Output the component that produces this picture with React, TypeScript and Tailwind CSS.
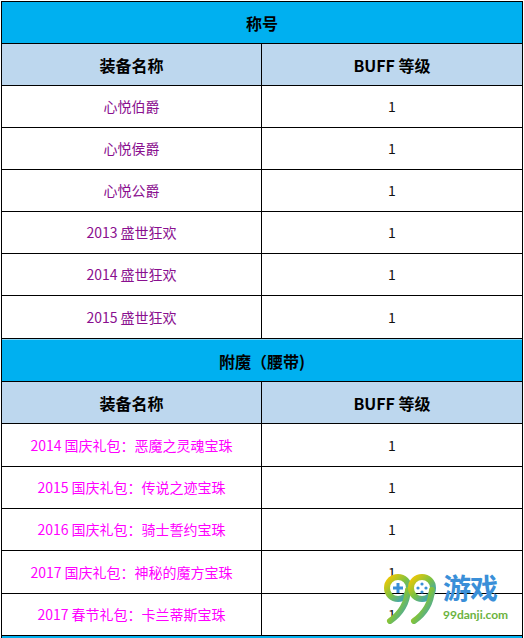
import React from 'react';

const FONT = { fontFamily: '"Microsoft YaHei", "Noto Sans CJK SC", "Noto Sans", sans-serif' };

type Item = { name: string; level: string };

const titles: Item[] = [
  { name: '心悦伯爵', level: '1' },
  { name: '心悦侯爵', level: '1' },
  { name: '心悦公爵', level: '1' },
  { name: '2013 盛世狂欢', level: '1' },
  { name: '2014 盛世狂欢', level: '1' },
  { name: '2015 盛世狂欢', level: '1' },
];

const enchants: Item[] = [
  { name: '2014 国庆礼包：恶魔之灵魂宝珠', level: '1' },
  { name: '2015 国庆礼包：传说之迹宝珠', level: '1' },
  { name: '2016 国庆礼包：骑士誓约宝珠', level: '1' },
  { name: '2017 国庆礼包：神秘的魔方宝珠', level: '1' },
  { name: '2017 春节礼包：卡兰蒂斯宝珠', level: '1' },
];

function Heading({ text, h }: { text: string; h: string }) {
  return (
    <div className={`${h} flex items-center justify-center bg-[#00b0f0] border-b border-black text-[16px] font-bold text-black`}>
      {text}
    </div>
  );
}

function HeaderRow({ h }: { h: string }) {
  return (
    <div className={`${h} flex bg-[#bdd7ee] border-b border-black text-[16px] font-bold text-black`}>
      <div className="w-[260px] flex items-center justify-center border-r border-black">装备名称</div>
      <div className="flex-1 flex items-center justify-center">BUFF 等级</div>
    </div>
  );
}

function DataRow({ item, h, color }: { item: Item; h: string; color: string }) {
  return (
    <div className={`${h} flex bg-white border-b border-black text-[14px]`}>
      <div className={`w-[260px] flex items-center justify-center border-r border-black ${color}`}>{item.name}</div>
      <div className="flex-1 flex items-center justify-center text-[#111]">{item.level}</div>
    </div>
  );
}

function Logo() {
  return (
    <div className="absolute left-[384px] top-[567px] flex items-start gap-[3px] pointer-events-none">
      <svg className="mt-[5px]" width="56" height="52" viewBox="0 0 56 52">
        <defs>
          <linearGradient id="g9" x1="0" y1="0" x2="1" y2="1">
            <stop offset="0" stopColor="#f6c800" />
            <stop offset="0.5" stopColor="#7cc242" />
            <stop offset="1" stopColor="#2e9ad8" />
          </linearGradient>
        </defs>
        <circle cx="14" cy="16" r="11" fill="none" stroke="url(#g9)" strokeWidth="6" />
        <path d="M24 18 C23 32 16 42 6 49" fill="none" stroke="url(#g9)" strokeWidth="6" strokeLinecap="round" />
        <circle cx="38" cy="16" r="11" fill="none" stroke="url(#g9)" strokeWidth="6" />
        <path d="M48 18 C47 32 40 42 30 49" fill="none" stroke="url(#g9)" strokeWidth="6" strokeLinecap="round" />
        <rect x="9" y="14.5" width="10" height="3" fill="#3a8fd8" />
        <rect x="12.5" y="11" width="3" height="10" fill="#3a8fd8" />
        <circle cx="38" cy="12" r="1.6" fill="#3a8fd8" />
        <circle cx="38" cy="20" r="1.6" fill="#3a8fd8" />
        <circle cx="34" cy="16" r="1.6" fill="#3a8fd8" />
        <circle cx="42" cy="16" r="1.6" fill="#3a8fd8" />
      </svg>
      <div className="flex flex-col items-start">
        <span className="text-[28px] leading-[40px] font-bold text-[#3a8fd8] tracking-[-1px]">游戏</span>
        <span className="text-[12px] leading-[15px] font-bold text-[#6cb33e]" style={{ fontFamily: 'Lato, "Open Sans", sans-serif' }}>
          99danji.com
        </span>
      </div>
    </div>
  );
}

export default function App() {
  const titleH = ['h-[42px]', 'h-[42px]', 'h-[42px]', 'h-[42px]', 'h-[42px]', 'h-[43px]'];
  const enchantH = ['h-[43px]', 'h-[42px]', 'h-[42px]', 'h-[43px]', 'h-[42px]'];

  return (
    <div className="relative w-[524px] h-[638px] bg-white overflow-hidden" style={FONT}>
      <div className="ml-[1px] mt-[1px] w-[522px] border-t border-l border-r border-black">
        <Heading text="称号" h="h-[42px]" />
        <HeaderRow h="h-[42px]" />
        {titles.map((t, i) => (
          <DataRow key={t.name} item={t} h={titleH[i]} color="text-[#8a0f8f]" />
        ))}
        <div className="border-t border-[#7fd4f5]" />
        <Heading text="附魔（腰带)" h="h-[42px]" />
        <HeaderRow h="h-[42px]" />
        {enchants.map((t, i) => (
          <DataRow key={t.name} item={t} h={enchantH[i]} color="text-[#ff00ff]" />
        ))}
        <div className="h-[10px] bg-[#00b0f0]" />
      </div>
      <Logo />
    </div>
  );
}
